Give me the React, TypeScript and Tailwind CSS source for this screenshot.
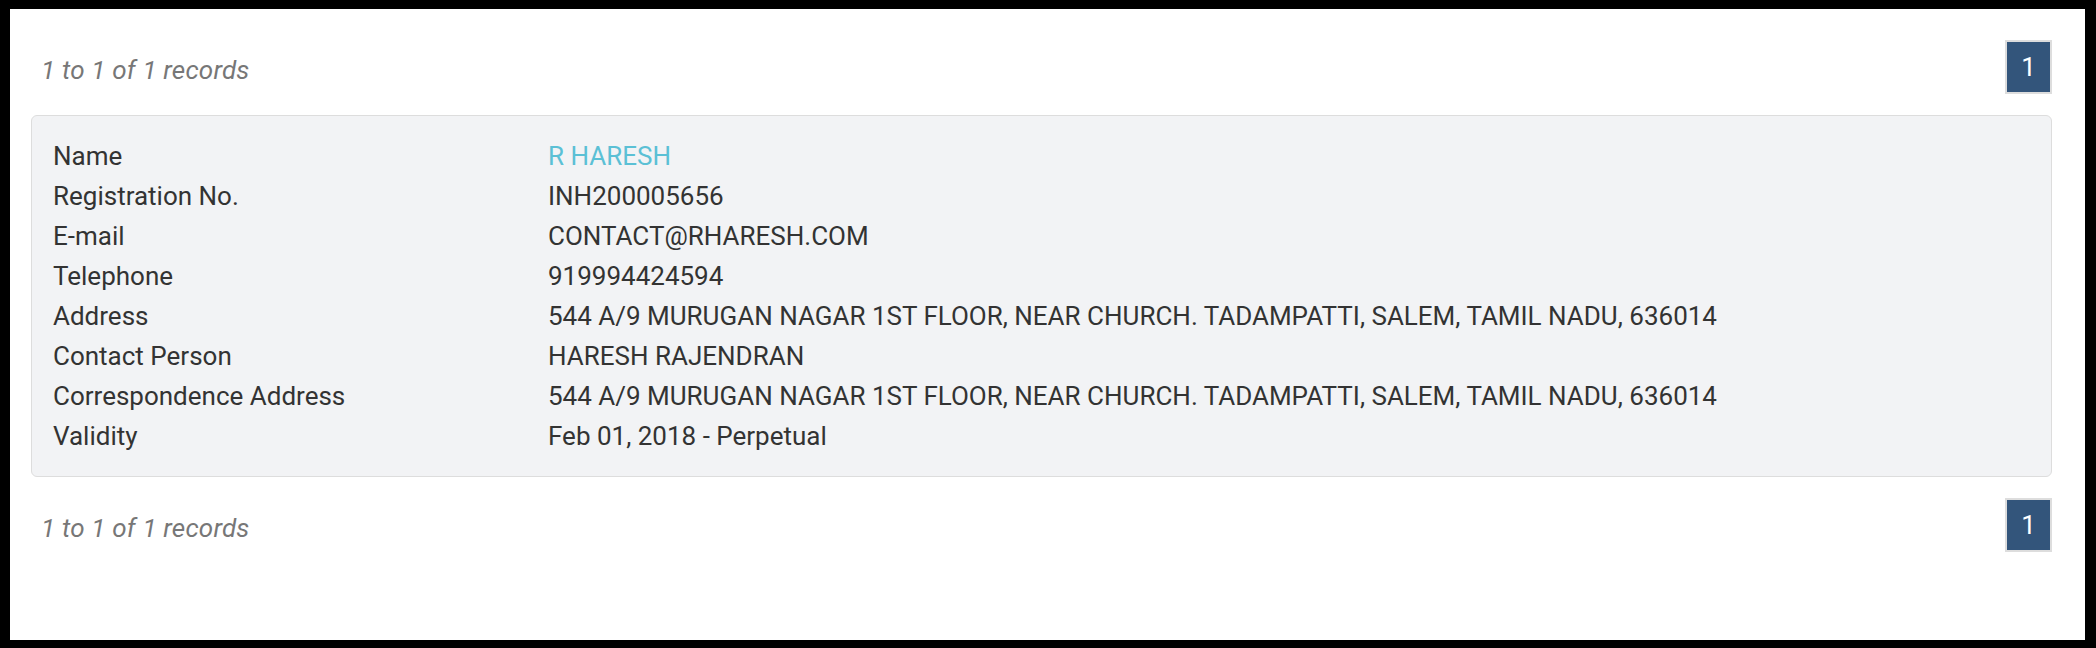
import React from 'react';

const rows: { label: string; value: string; link?: boolean }[] = [
  { label: 'Name', value: 'R HARESH', link: true },
  { label: 'Registration No.', value: 'INH200005656' },
  { label: 'E-mail', value: 'CONTACT@RHARESH.COM' },
  { label: 'Telephone', value: '919994424594' },
  { label: 'Address', value: '544 A/9 MURUGAN NAGAR 1ST FLOOR, NEAR CHURCH. TADAMPATTI, SALEM, TAMIL NADU, 636014' },
  { label: 'Contact Person', value: 'HARESH RAJENDRAN' },
  { label: 'Correspondence Address', value: '544 A/9 MURUGAN NAGAR 1ST FLOOR, NEAR CHURCH. TADAMPATTI, SALEM, TAMIL NADU, 636014' },
  { label: 'Validity', value: 'Feb 01, 2018 - Perpetual' },
];

function Pager() {
  return (
    <div className="flex items-center justify-between h-[54px]">
      <span className="pl-[10px] pt-[6px] italic text-[26px] text-[#777777] tracking-[0.2px]">1 to 1 of 1 records</span>
      <span className="flex items-center justify-center w-[47px] h-[54px] bg-[#33557b] border-2 border-[#dddddd] text-white text-[26px] leading-none">
        1
      </span>
    </div>
  );
}

export default function App() {
  return (
    <div
      className="h-[648px] w-full bg-black pt-[9px] pl-[10px] pr-[11px] pb-[8px]"
      style={{ fontFamily: 'Roboto, "Liberation Sans", sans-serif' }}
    >
      <div className="h-full bg-white pl-[21px] pr-[33px] pt-[31px]">
        <Pager />

        {/* record card */}
        <div className="my-[21px] bg-[#f2f3f5] border border-[#dddddd] rounded-[6px] px-[21px] py-[20px]">
          {rows.map((row) => (
            <div key={row.label} className="flex h-[40px] items-center text-[26px] text-[#333333]">
              <div className="w-[495px] shrink-0">{row.label}</div>
              <div className={row.link ? 'text-[#5bc0d5]' : ''}>{row.value}</div>
            </div>
          ))}
        </div>

        <Pager />
      </div>
    </div>
  );
}
